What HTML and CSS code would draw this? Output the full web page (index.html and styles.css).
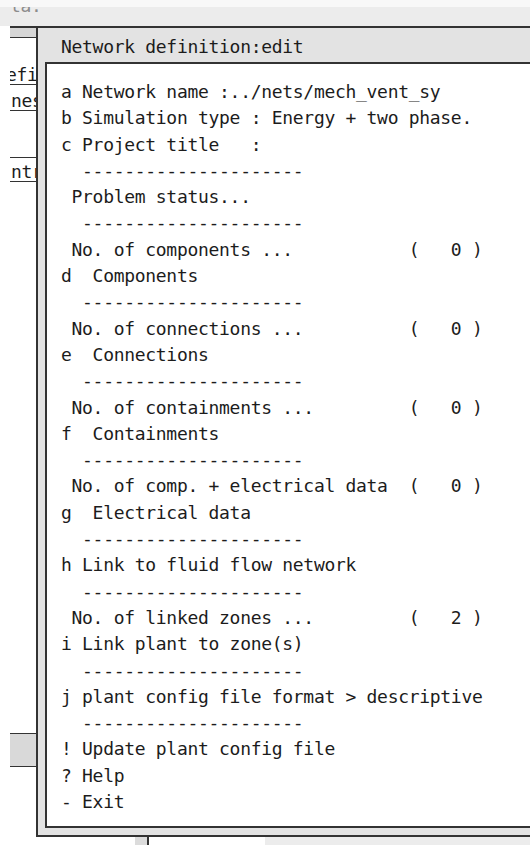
FILE: index.html
```html
<!DOCTYPE html>
<html lang="en">
<head>
  <meta charset="UTF-8">
  <meta name="viewport" content="width=device-width, initial-scale=1.0">
  <title>Network definition:edit</title>
  <link rel="stylesheet" href="styles.css">
</head>
<body>
  <div class="topbar">
    <div class="topbar-text"><span>ta.</span></div>
  </div>

  <div class="workspace">
    <!-- part of the window underneath the dialog -->
    <div class="side">
      <div class="side-head"></div>
      <div class="side-link first"><span class="shift">efi</span></div>
      <div class="side-link second">nes</div>
      <div class="side-rule"></div>
      <div class="side-link third">ntr</div>
      <div class="side-button"></div>
    </div>

    <div class="dialog">
      <div class="dialog-title">Network definition:edit</div>
      <div class="dialog-body">
<pre class="menu">a Network name :../nets/mech_vent_sy
b Simulation type : Energy + two phase.
c Project title   :
  ---------------------
 Problem status...
  ---------------------
 No. of components ...           (   0 )
d  Components
  ---------------------
 No. of connections ...          (   0 )
e  Connections
  ---------------------
 No. of containments ...         (   0 )
f  Containments
  ---------------------
 No. of comp. + electrical data  (   0 )
g  Electrical data
  ---------------------
h Link to fluid flow network
  ---------------------
 No. of linked zones ...         (   2 )
i Link plant to zone(s)
  ---------------------
j plant config file format &gt; descriptive
  ---------------------
! Update plant config file
? Help
- Exit</pre>
      </div>
    </div>
  </div>

  <div class="footer">
    <div class="footer-gap"></div>
    <div class="footer-handle"></div>
    <div class="footer-space"></div>
    <div class="footer-fill"></div>
  </div>
</body>
</html>
```

FILE: styles.css
```css
body {
  margin: 0;
  height: 845px;
  overflow: hidden;
  background-color: #fff;
  font-family: "DejaVu Sans Mono", monospace;
  font-size: 18px;
  letter-spacing: -0.3px;
  color: #1c1c1c;
}

/* strip of the window above */
.topbar {
  height: 26px;
  padding-top: 7px;
  box-sizing: border-box;
  background: linear-gradient(#f8f8f8 0 7px, #ececec 7px);
}

.topbar-text {
  height: 6px;
  padding-left: 10px;
  overflow: hidden;
}

.topbar-text span {
  display: block;
  margin-top: -10px;
  line-height: 18px;
  color: #8c8c8c;
}

.workspace {
  display: flex;
  margin-left: 10px;
  border-top: 2px solid #333;
}

/* left column */
.side {
  width: 26px;
  flex: none;
}

.side-head {
  height: 9px;
  background-color: #d6d6d6;
  border-bottom: 1px solid #333;
}

.side-link {
  height: 18px;
  line-height: 18px;
  padding-left: 1px;
  border-bottom: 1px solid #333;
  overflow: hidden;
  white-space: nowrap;
}

.side-link.first {
  margin-top: 28px;
}

.side-link.second {
  margin-top: 7px;
}

.side-link.third {
  margin-top: 5px;
}

.shift {
  margin-left: -5px;
}

.side-rule {
  margin-top: 46px;
  border-top: 1px solid #333;
}

.side-button {
  margin-top: 551px;
  height: 32px;
  background-color: #d9d9d9;
  border-top: 1px solid #333;
  border-bottom: 1px solid #333;
}

/* dialog */
.dialog {
  flex: 1;
  padding-bottom: 7px;
  background-color: #e3e3e3;
  border-left: 2px solid #333;
  border-bottom: 2px solid #333;
}

.dialog-title {
  height: 34px;
  box-sizing: border-box;
  padding: 2px 0 0 23px;
  line-height: 33px;
  white-space: nowrap;
}

.dialog-body {
  height: 766px;
  box-sizing: border-box;
  margin-left: 7px;
  padding: 15px 0 0 14px;
  background-color: #fff;
  border: 2px solid #333;
  border-right: none;
}

.menu {
  margin: 0;
  font: inherit;
  line-height: 26.3px;
}

/* bits below the dialog */
.footer {
  display: flex;
  height: 8px;
}

.footer-gap {
  width: 135px;
}

.footer-handle {
  width: 12px;
  background-color: #dcdcdc;
  border-right: 2px solid #333;
}

.footer-space {
  width: 116px;
}

.footer-fill {
  flex: 1;
  background-color: #ececec;
}
```
